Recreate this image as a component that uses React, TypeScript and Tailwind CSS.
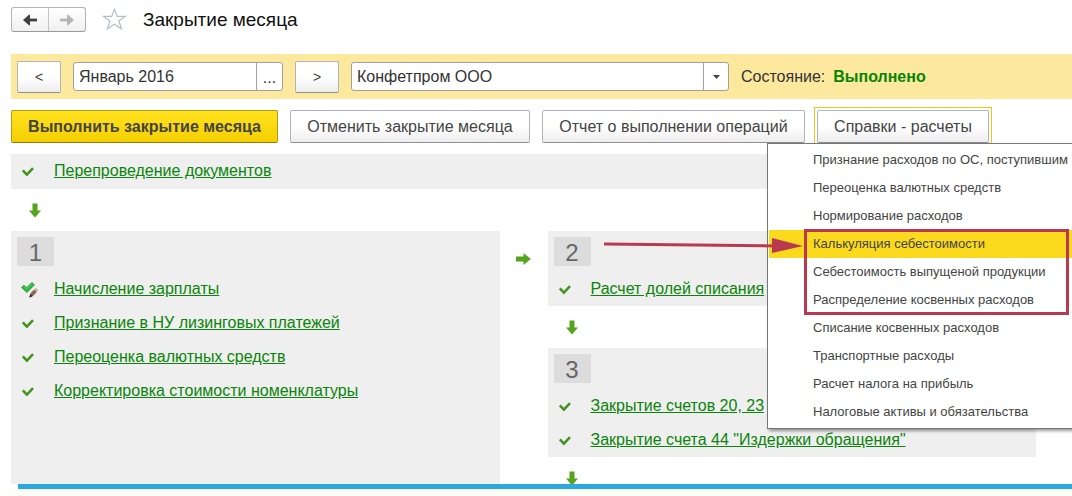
import React from 'react';

const reports = [
  'Признание расходов по ОС, поступившим',
  'Переоценка валютных средств',
  'Нормирование расходов',
  'Калькуляция себестоимости',
  'Себестоимость выпущеной продукции',
  'Распределение косвенных расходов',
  'Списание косвенных расходов',
  'Транспортные расходы',
  'Расчет налога на прибыль',
  'Налоговые активы и обязательства',
];

const CheckIcon = () => (
  <svg width="14" height="12" viewBox="0 0 14 12" fill="none">
    <path d="M1.8 4.4 L5.9 8.6 L12 2.2" stroke="#469322" strokeWidth="2.6" />
  </svg>
);

const CheckPencilIcon = () => (
  <svg width="18" height="16" viewBox="0 0 18 16" fill="none">
    <path
      d="M0.6 5.4 L3 3.4 L5.6 5.8 L10.8 0.6 L13.4 2.8 L6 10.4 Z"
      fill="#2dbb44"
      stroke="#1c9433"
      strokeWidth="0.9"
      strokeLinejoin="round"
    />
    <path d="M3 4.6 L5.6 7 L11 1.6" stroke="#5fd872" strokeWidth="0.8" />
    <path d="M8.4 15.4 L9.6 11 L13.2 7.4 L15.8 10 L12.4 13.8 Z" fill="#8f6455" />
    <path d="M13.2 7.4 L15 6 L17 8.2 L15.8 10 Z" fill="#c9a79c" />
    <path d="M8.4 15.4 L9.2 12.2 L11.6 14.2 Z" fill="#33211c" />
  </svg>
);

const DownArrow = () => (
  <svg className="shrink-0" width="12" height="15" viewBox="0 0 12 15">
    <path d="M3.5 0.5 H8.5 V7.5 H12 L6 14.5 L0 7.5 H3.5 Z" fill="#55a31f" />
  </svg>
);

const RightArrow = () => (
  <svg width="15" height="12" viewBox="0 0 15 12">
    <path d="M0 3.5 H7.5 V0 L14.8 6 L7.5 12 V8.5 H0 Z" fill="#55a31f" />
  </svg>
);

type StepProps = { title: string; edited?: boolean };

const Step = ({ title, edited }: StepProps) => (
  <li className="flex h-[34px] items-center">
    <span className="flex w-[43px] shrink-0 items-center pl-[10px] pt-[2px]">
      {edited ? <CheckPencilIcon /> : <CheckIcon />}
    </span>
    <a href="#" className="whitespace-nowrap text-[#0b840b] underline">
      {title}
    </a>
  </li>
);

type StageProps = { number: number; children: React.ReactNode };

const Stage = ({ number, children }: StageProps) => (
  <section className="bg-[#efefef] pt-[6px]">
    <div className="mb-[6px] ml-[6px] flex h-[29px] w-[37px] items-center justify-center bg-[#dcdcdc] pt-[2px] text-[24px] leading-none text-[#666]">
      {number}
    </div>
    <ul>{children}</ul>
  </section>
);

const buttonClass =
  'rounded-[2px] border border-[#b3b3b3] border-b-[#8f8f8f] bg-gradient-to-b from-white from-50% to-[#ededed] text-[#444]';

const ReportsMenu = () => (
  <div className="absolute -left-[50px] top-[33px] z-10 w-[330px] border border-[#777] bg-white p-px shadow-[2px_2px_3px_rgba(0,0,0,0.4)]">
    <ul className="pb-px pt-px text-[13px] text-[#444]">
      {reports.map((name) => (
        <li key={name}>
          <button
            type="button"
            className={
              name === 'Калькуляция себестоимости'
                ? 'h-[28px] w-full whitespace-nowrap bg-[#fbda1d] pl-11 text-left'
                : 'h-[28px] w-full whitespace-nowrap pl-11 text-left'
            }
          >
            {name}
          </button>
        </li>
      ))}
    </ul>

    {/* marks the three cost reports */}
    <div className="pointer-events-none absolute left-[36px] top-[85px] h-[86px] w-[265px] border-[3px] border-[#b93a50]" />
    <svg
      className="pointer-events-none absolute -left-[164px] top-[92px]"
      width="200"
      height="18"
      viewBox="0 0 200 18"
    >
      <path d="M0 8 L174 10" stroke="#b93a50" strokeWidth="3" />
      <path d="M168 2 L199 10 L168 17 Z" fill="#b93a50" />
    </svg>
  </div>
);

const App = () => {
  return (
    <div className="overflow-hidden bg-white font-['Liberation_Sans',Arial,sans-serif] text-[16px] leading-[20px] text-[#333]">
      <header className="flex h-[54px] items-start pl-[11px] pt-[7px]">
        <div className="flex h-[25px] w-[75px] rounded-[3px] border border-[#b3b3b3] border-b-[#999] bg-gradient-to-b from-white to-[#f0f0f0]">
          <button
            type="button"
            aria-label="Назад"
            className="flex flex-1 items-center justify-center border-r border-[#c4c4c4]"
          >
            <svg width="14" height="12" viewBox="0 0 14 12" fill="none">
              <path d="M14 6 H4" stroke="#404040" strokeWidth="2.8" />
              <path d="M7 0.6 V11.4 L5.4 10.8 L0 6 L5.4 1.2 Z" fill="#404040" />
            </svg>
          </button>
          <button
            type="button"
            aria-label="Вперед"
            className="flex flex-1 items-center justify-center"
          >
            <svg width="14" height="12" viewBox="0 0 14 12" fill="none">
              <path d="M0 6 H10" stroke="#b5b5b5" strokeWidth="2.8" />
              <path d="M7 0.6 V11.4 L8.6 10.8 L14 6 L8.6 1.2 Z" fill="#b5b5b5" />
            </svg>
          </button>
        </div>
        <button type="button" aria-label="В избранное" className="ml-4">
          <svg width="25" height="24" viewBox="0 0 25 24" fill="none">
            <path
              d="M12.4 2.4 L15.1 9.4 L23.2 9.4 L16.8 14 L19.4 21.8 L12.4 17.2 L5.4 21.8 L8 14 L1.6 9.4 L9.7 9.4 Z"
              stroke="#b4bcc6"
              strokeWidth="1.2"
            />
          </svg>
        </button>
        <h1 className="ml-4 pt-[3px] text-[19px] text-[#111]">
          Закрытие месяца
        </h1>
      </header>

      <div className="ml-[11px] flex h-[45px] items-center gap-3 bg-[#fce99d] pl-[6px]">
        <button
          type="button"
          aria-label="Предыдущий месяц"
          className={`${buttonClass} h-[32px] w-[44px] text-[14px]`}
        >
          &lt;
        </button>
        <div className="flex h-[29px] w-[210px] overflow-hidden rounded-[3px] border border-[#a0a0a0] bg-white">
          <input
            type="text"
            aria-label="Период"
            defaultValue="Январь 2016"
            className="min-w-0 flex-1 px-[5px] outline-none"
          />
          <button
            type="button"
            aria-label="Выбрать период"
            className="w-[26px] border-l border-[#a0a0a0] pt-[2px]"
          >
            ...
          </button>
        </div>
        <button
          type="button"
          aria-label="Следующий месяц"
          className={`${buttonClass} h-[32px] w-[44px] text-[14px]`}
        >
          &gt;
        </button>
        <div className="relative h-[29px] w-[378px] overflow-hidden rounded-[3px] border border-[#a0a0a0] bg-white">
          <select
            aria-label="Организация"
            className="h-full w-full appearance-none px-[5px] outline-none"
          >
            <option>Конфетпром ООО</option>
          </select>
          <span className="pointer-events-none absolute right-0 top-0 flex h-full w-[25px] items-center justify-center border-l border-[#a0a0a0]">
            <svg width="7" height="4" viewBox="0 0 7 4">
              <path d="M0 0 H7 L3.5 4 Z" fill="#444" />
            </svg>
          </span>
        </div>
        <p className="flex gap-2">
          <span>Состояние:</span>
          <strong className="text-[#078407]">Выполнено</strong>
        </p>
      </div>

      <div className="ml-[11px] mt-[11px] flex h-[33px] gap-3 whitespace-nowrap">
        <button
          type="button"
          className="w-[267px] rounded-[2px] border border-[#b39b16] border-b-[#8f7c10] bg-gradient-to-b from-[#ffe21c] to-[#f5d000] font-bold text-[#444]"
        >
          Выполнить закрытие месяца
        </button>
        <button type="button" className={`${buttonClass} w-[240px]`}>
          Отменить закрытие месяца
        </button>
        <button type="button" className={`${buttonClass} w-[263px]`}>
          Отчет о выполнении операций
        </button>
        <div className="relative outline-1 outline-offset-2 outline-[#f2c511]">
          <button type="button" className={`${buttonClass} h-full w-[172px]`}>
            Справки - расчеты
          </button>
          <ReportsMenu />
        </div>
      </div>

      <main className="ml-[11px] mr-9 mt-[11px]">
        <ul className="bg-[#efefef] pb-px">
          <Step title="Перепроведение документов" />
        </ul>
        <div className="flex h-[42px] items-center pl-[18px]">
          <DownArrow />
        </div>

        <div className="grid grid-cols-[1fr_48px_1fr]">
          <Stage number={1}>
            <Step title="Начисление зарплаты" edited />
            <Step title="Признание в НУ лизинговых платежей" />
            <Step title="Переоценка валютных средств" />
            <Step title="Корректировка стоимости номенклатуры" />
          </Stage>

          <div className="flex justify-center pt-[22px]">
            <RightArrow />
          </div>

          <div className="flex min-w-0 flex-col">
            <Stage number={2}>
              <Step title="Расчет долей списания" />
            </Stage>
            <div className="flex h-[42px] items-center pl-[18px]">
              <DownArrow />
            </div>
            <Stage number={3}>
              <Step title="Закрытие счетов 20, 23" />
              <Step title='Закрытие счета 44 "Издержки обращения"' />
            </Stage>
            <div className="flex h-[27px] items-start overflow-hidden pl-[18px] pt-[14px]">
              <DownArrow />
            </div>
          </div>
        </div>
      </main>

      <div className="ml-[18px] h-[5px] bg-[#29a8e0]" />
      <div className="h-[7px] bg-[#fffffa]" />
    </div>
  );
};

export default App;
